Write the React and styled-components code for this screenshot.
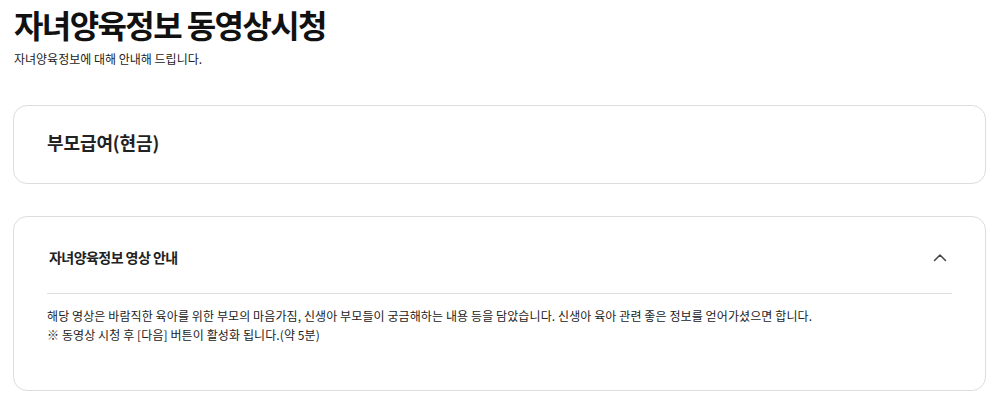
import React, { useState } from "react"
import styled, { createGlobalStyle } from "styled-components"

const GlobalStyle = createGlobalStyle`
  html, body {
    margin: 0;
    padding: 0;
    background: #ffffff;
  }
  body {
    font-family: "Noto Sans CJK KR", "Noto Sans", sans-serif;
    color: #222222;
  }
`

const Page = styled.div`
  padding: 4px 7px 0 13px;
`

const PageTitle = styled.h1`
  margin: 0 0 0 1px;
  font-size: 32px;
  line-height: 40px;
  font-weight: 700;
  letter-spacing: -1.6px;
  color: #111111;
`

const PageDesc = styled.p`
  margin: 6px 0 0 1px;
  font-size: 12px;
  line-height: 18px;
  letter-spacing: 0;
  color: #222222;
`

const Card = styled.section`
  border: 1px solid #dddddd;
  border-radius: 14px;
  background: #ffffff;
  margin-top: ${p => p.$top}px;
`

const PlainCard = styled(Card)`
  padding: 23px 33px 28px;
`

const CardTitle = styled.h2`
  margin: 0;
  font-size: 18px;
  line-height: 26px;
  font-weight: 700;
  letter-spacing: -0.1px;
  color: #222222;
`

const AccordionCard = styled(Card)`
  padding: 0 33px;
`

const AccordionHeader = styled.button`
  display: flex;
  width: 100%;
  align-items: center;
  justify-content: space-between;
  padding: 31px 5px 26px 2px;
  border: 0;
  border-bottom: 1px solid #dddddd;
  background: none;
  cursor: pointer;
  font-family: inherit;
  text-align: left;
`

const AccordionTitle = styled.span`
  font-size: 14px;
  line-height: 19px;
  font-weight: 700;
  letter-spacing: -0.55px;
  color: #222222;
`

const Chevron = styled.svg`
  width: 14px;
  height: 14px;
  transform: ${p => (p.$open ? "none" : "rotate(180deg)")};
`

const AccordionBody = styled.div`
  padding: 12px 0 46px;
  font-size: 12px;
  line-height: 19px;
  letter-spacing: 0.1px;
  color: #222222;

  p {
    margin: 0;
  }
`

const App = () => {
  const [open, setOpen] = useState(true)

  return (
    <Page>
      <GlobalStyle />
      <PageTitle>자녀양육정보 동영상시청</PageTitle>
      <PageDesc>자녀양육정보에 대해 안내해 드립니다.</PageDesc>

      <PlainCard $top={37}>
        <CardTitle>부모급여(현금)</CardTitle>
      </PlainCard>

      <AccordionCard $top={32}>
        <AccordionHeader onClick={() => setOpen(!open)}>
          <AccordionTitle>자녀양육정보 영상 안내</AccordionTitle>
          <Chevron $open={open} viewBox="0 0 14 14" fill="none">
            <path
              d="M1.5 9.5L7 4L12.5 9.5"
              stroke="#444444"
              strokeWidth="1.5"
              strokeLinecap="round"
              strokeLinejoin="round"
            />
          </Chevron>
        </AccordionHeader>
        {open && (
          <AccordionBody>
            <p>
              해당 영상은 바람직한 육아를 위한 부모의 마음가짐, 신생아 부모들이 궁금해하는 내용 등을
              담았습니다. 신생아 육아 관련 좋은 정보를 얻어가셨으면 합니다.
            </p>
            <p>※ 동영상 시청 후 [다음] 버튼이 활성화 됩니다.(약 5분)</p>
          </AccordionBody>
        )}
      </AccordionCard>
    </Page>
  )
}

export default App
